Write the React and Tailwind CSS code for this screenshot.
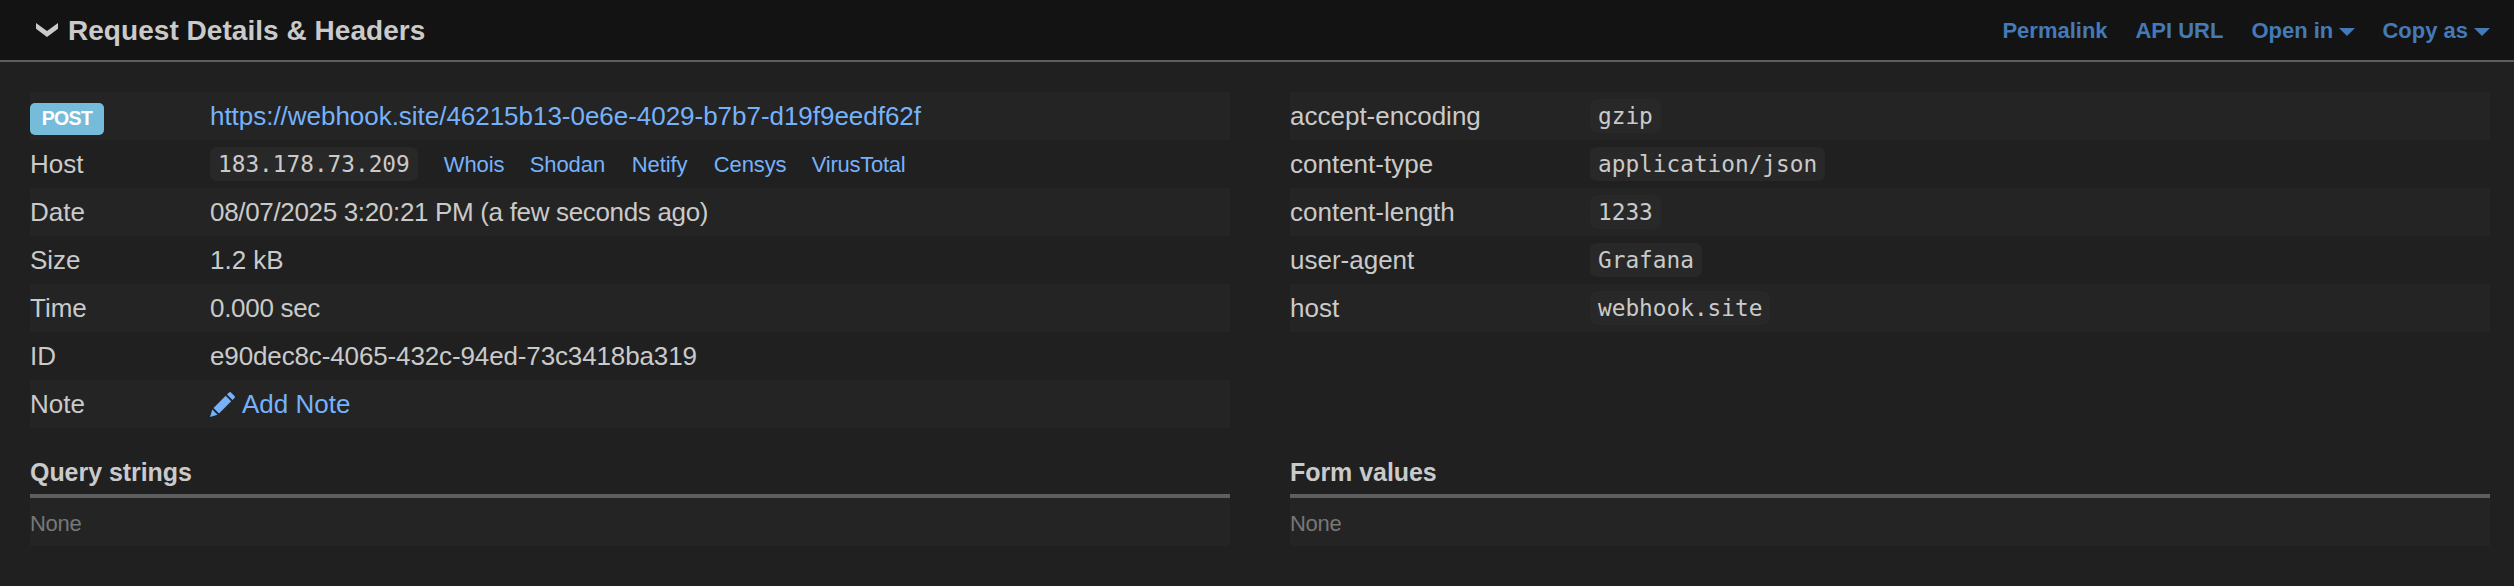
const code = "inline-flex h-[34px] items-center rounded-[7px] bg-[#282828] px-2 font-['DejaVu_Sans_Mono',monospace] text-[22.75px] leading-[34px]";

const lookups = [
  ["Whois", "w-[86px]"],
  ["Shodan", "w-[102px]"],
  ["Netify", "w-[82px]"],
  ["Censys", "w-[98px]"],
  ["VirusTotal", "tracking-[-0.25px]"],
];

const headers = [
  ["accept-encoding", "gzip"],
  ["content-type", "application/json"],
  ["content-length", "1233"],
  ["user-agent", "Grafana"],
  ["host", "webhook.site"],
];

function Caret() {
  return (
    <svg className="ml-[6px] mt-[3px] h-2 w-4" viewBox="0 0 16 8" fill="currentColor">
      <path d="M0 0h16L8 8z" />
    </svg>
  );
}

function Row({ label, children }) {
  return (
    <div className="flex h-12 items-center odd:bg-[#242424]">
      <div className="w-[180px]">{label}</div>
      <div className="flex items-center">{children}</div>
    </div>
  );
}

function EmptySection({ title }) {
  return (
    <section>
      <h3 className="flex h-[68px] items-center pt-6 text-[25px] font-bold leading-[30px] tracking-[-0.05px]">{title}</h3>
      <div className="flex h-[52px] items-center border-t-4 border-[#5e5e5e] bg-[#242424] pt-[3px] text-[22px] tracking-[-0.3px] text-[#777]">None</div>
    </section>
  );
}

export default function App() {
  return (
    <div className="h-[586px] w-full overflow-hidden bg-[#202020] font-['Liberation_Sans',Arial,sans-serif] text-[26px] leading-[30px] text-[#cacaca]">
      <header className="flex h-[62px] items-center justify-between border-b-2 border-[#5e5e5e] bg-[#131313] pl-9 pr-6 font-bold">
        <div className="flex items-center text-[28px]">
          <svg className="mr-[10px] h-[14px] w-[22px]" viewBox="0 0 22 14" fill="currentColor">
            <path d="M0 0L11 8L22 0V5.8L11 14L0 5.8z" />
          </svg>
          <h2 className="pt-px tracking-[0.04px]">Request Details &amp; Headers</h2>
        </div>
        <nav className="flex items-center pt-px text-[22px] text-[#447ab7]">
          <a className="w-[133px]">Permalink</a>
          <a className="w-[116px]">API URL</a>
          <a className="flex w-[131px] items-center">Open in<Caret /></a>
          <a className="flex items-center">Copy as<Caret /></a>
        </nav>
      </header>
      <main className="grid grid-cols-2 gap-x-[60px] pl-[30px] pr-6 pt-[30px]">
        <div className="h-[334px]">
          <Row label={<span className="mt-[6px] flex h-8 w-[74px] items-center justify-center rounded-[5px] bg-[#75bcda] pb-[2px] text-[19.5px] font-bold tracking-[-0.6px] text-white">POST</span>}>
            <a className="tracking-[-0.03px] text-[#76b2fb]">https://webhook.site/46215b13-0e6e-4029-b7b7-d19f9eedf62f</a>
          </Row>
          <Row label="Host">
            <code className={code}>183.178.73.209</code>
            <div className="ml-[26px] flex pt-[2px] text-[22px] tracking-[-0.1px] text-[#76b2fb]">
              {lookups.map(([name, width]) => (
                <a key={name} className={width}>{name}</a>
              ))}
            </div>
          </Row>
          <Row label="Date"><span className="tracking-[-0.33px]">08/07/2025 3:20:21 PM (a few seconds ago)</span></Row>
          <Row label="Size">1.2 kB</Row>
          <Row label="Time"><span className="tracking-[-0.3px]">0.000 sec</span></Row>
          <Row label="ID"><span className="tracking-[-0.13px]">e90dec8c-4065-432c-94ed-73c3418ba319</span></Row>
          <Row label="Note">
            <a className="flex items-center text-[#76b2fb]">
              <svg className="mr-[7px] h-[25px] w-[25px]" viewBox="0 0 25 25" fill="currentColor">
                <path d="M19 0.5Q20 -0.3 21 0.5L24.5 4Q25.3 5 24.5 6L22.5 8L17 2.5z" />
                <path d="M15.7 3.8L21.2 9.3L9 21.5L3.5 16z" />
                <path d="M2.3 17.5L7.5 22.7L0 25z" />
              </svg>
              Add Note
            </a>
          </Row>
        </div>
        <div>
          {headers.map(([name, value]) => (
            <div key={name} className="flex h-12 items-center odd:bg-[#242424]">
              <div className="w-[300px]">{name}</div>
              <code className={code}>{value}</code>
            </div>
          ))}
        </div>
        <EmptySection title="Query strings" />
        <EmptySection title="Form values" />
      </main>
    </div>
  );
}
